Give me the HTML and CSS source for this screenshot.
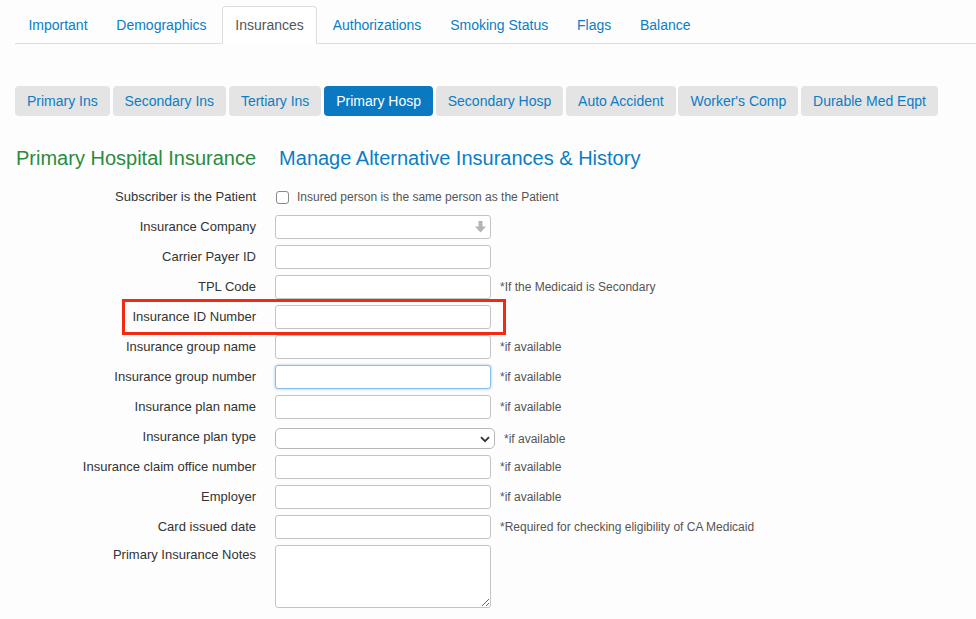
FILE: index.html
```html
<!DOCTYPE html>
<html>
<head>
    <title>Patient - Insurances</title>
    <meta name="viewport" content="width=device-width, initial-scale=1.0">
    <link rel="stylesheet" href="styles.css">
</head>
<body>
    <div class="page">
        <ul class="nav-tabs">
            <li><a href="#">Important</a></li>
            <li><a href="#">Demographics</a></li>
            <li class="active"><a href="#">Insurances</a></li>
            <li><a href="#">Authorizations</a></li>
            <li><a href="#">Smoking Status</a></li>
            <li><a href="#">Flags</a></li>
            <li><a href="#">Balance</a></li>
        </ul>

        <div class="ins-tabs">
            <a href="#" class="ins-tab">Primary Ins</a>
            <a href="#" class="ins-tab">Secondary Ins</a>
            <a href="#" class="ins-tab">Tertiary Ins</a>
            <a href="#" class="ins-tab active">Primary Hosp</a>
            <a href="#" class="ins-tab">Secondary Hosp</a>
            <a href="#" class="ins-tab">Auto Accident</a>
            <a href="#" class="ins-tab">Worker's Comp</a>
            <a href="#" class="ins-tab">Durable Med Eqpt</a>
        </div>

        <h3 class="section-title">
            <span class="title-main">Primary Hospital Insurance</span>
            <a href="#" class="title-link">Manage Alternative Insurances &amp; History</a>
        </h3>

        <form class="ins-form">
            <div class="row">
                <label class="label">Subscriber is the Patient</label>
                <div class="control">
                    <input type="checkbox" class="check">
                    <span class="check-text">Insured person is the same person as the Patient</span>
                </div>
            </div>
            <div class="row">
                <label class="label">Insurance Company</label>
                <div class="control">
                    <span class="combo">
                        <input type="text" class="field">
                        <svg class="combo-arrow" width="11" height="12" viewBox="0 0 11 12">
                            <rect x="3.5" y="0" width="4" height="6" fill="#b4b4b4"/>
                            <polygon points="0,5.5 11,5.5 5.5,11.5" fill="#b4b4b4"/>
                        </svg>
                    </span>
                </div>
            </div>
            <div class="row">
                <label class="label">Carrier Payer ID</label>
                <div class="control"><input type="text" class="field"></div>
            </div>
            <div class="row">
                <label class="label">TPL Code</label>
                <div class="control">
                    <input type="text" class="field">
                    <span class="hint">*If the Medicaid is Secondary</span>
                </div>
            </div>
            <div class="row highlighted">
                <label class="label">Insurance ID Number</label>
                <div class="control"><input type="text" class="field"></div>
                <div class="callout"></div>
            </div>
            <div class="row">
                <label class="label">Insurance group name</label>
                <div class="control">
                    <input type="text" class="field">
                    <span class="hint">*if available</span>
                </div>
            </div>
            <div class="row">
                <label class="label">Insurance group number</label>
                <div class="control">
                    <input type="text" class="field focused">
                    <span class="hint">*if available</span>
                </div>
            </div>
            <div class="row">
                <label class="label">Insurance plan name</label>
                <div class="control">
                    <input type="text" class="field">
                    <span class="hint">*if available</span>
                </div>
            </div>
            <div class="row">
                <label class="label">Insurance plan type</label>
                <div class="control">
                    <span class="select-wrap">
                        <select class="select"><option></option></select>
                        <svg class="chevron" width="10" height="7" viewBox="0 0 10 7">
                            <path d="M1 1.2 L5 5.2 L9 1.2" fill="none" stroke="#333" stroke-width="1.8"/>
                        </svg>
                    </span>
                    <span class="hint">*if available</span>
                </div>
            </div>
            <div class="row">
                <label class="label">Insurance claim office number</label>
                <div class="control">
                    <input type="text" class="field">
                    <span class="hint">*if available</span>
                </div>
            </div>
            <div class="row">
                <label class="label">Employer</label>
                <div class="control">
                    <input type="text" class="field">
                    <span class="hint">*if available</span>
                </div>
            </div>
            <div class="row">
                <label class="label">Card issued date</label>
                <div class="control">
                    <input type="text" class="field">
                    <span class="hint">*Required for checking eligibility of CA Medicaid</span>
                </div>
            </div>
            <div class="row row-top">
                <label class="label">Primary Insurance Notes</label>
                <div class="control"><textarea class="notes"></textarea></div>
            </div>
        </form>
    </div>
</body>
</html>
```

FILE: styles.css
```css
body {
    margin: 0;
    background: #fdfdfd;
    font-family: 'Liberation Sans', Arial, Helvetica, sans-serif;
    font-size: 13px;
    color: #333;
}
.page {
    padding: 0 0 0 15px;
}
a {
    text-decoration: none;
}

/* top tabs */
.nav-tabs {
    display: flex;
    list-style: none;
    margin: 6px 0 0 0;
    padding: 0;
    border-bottom: 1px solid #ddd;
}
.nav-tabs li {
    margin: 0 2px -1px 0;
}
.nav-tabs a {
    display: block;
    padding: 8px 12.4px;
    line-height: 20px;
    font-size: 14px;
    color: #0b7dc5;
    border: 1px solid transparent;
    border-radius: 4px 4px 0 0;
}
.nav-tabs li.active a {
    color: #555;
    background: #fff;
    border-color: #ddd;
    border-bottom-color: #fff;
}

/* insurance type buttons */
.ins-tabs {
    display: flex;
    gap: 2.8px;
    margin-top: 42px;
}
.ins-tab {
    display: block;
    padding: 5px 12px;
    line-height: 20px;
    font-size: 14px;
    color: #0b7dc5;
    background: #e4e4e4;
    border-radius: 4px;
}
.ins-tab.active {
    background: #0a79c2;
    color: #fff;
}

/* heading */
.section-title {
    display: flex;
    gap: 23px;
    margin: 30px 0 15px 1px;
    font-size: 20px;
    font-weight: normal;
    line-height: 24px;
}
.title-main {
    color: #2a8b3d;
}
.title-link {
    color: #0b7dc5;
}

/* form */
.ins-form {
    display: flex;
    flex-direction: column;
    gap: 6px;
}
.row {
    display: flex;
    align-items: center;
    height: 24px;
    position: relative;
}
.row-top {
    align-items: flex-start;
    height: auto;
}
.label {
    width: 241px;
    margin-right: 19px;
    text-align: right;
    line-height: 18px;
    margin-top: -1px;
}
.row-top .label {
    margin-top: 1px;
}
.control {
    display: flex;
    align-items: center;
}
.field {
    box-sizing: border-box;
    width: 216px;
    height: 24px;
    margin: 0;
    padding: 2px 6px;
    border: 1px solid #c4c4c4;
    border-radius: 3px;
    background: #fff;
    font: inherit;
}
.field.focused {
    border-color: #86bdea;
    box-shadow: 0 0 3px rgba(90, 160, 225, 0.6);
    outline: none;
}
.hint {
    margin-left: 9px;
    font-size: 12px;
    color: #555;
}
.check {
    width: 13px;
    height: 13px;
    margin: 1px 0 0 1px;
    appearance: none;
    border: 1px solid #8a8a8a;
    border-radius: 3px;
    background: #fff;
}
.check-text {
    margin-left: 8px;
    font-size: 12px;
    color: #555;
}

.combo {
    position: relative;
    display: block;
}
.combo-arrow {
    position: absolute;
    right: 5px;
    top: 6px;
}

.select-wrap {
    position: relative;
    display: block;
    margin-top: 3px;
}
.select {
    box-sizing: border-box;
    display: block;
    width: 220px;
    height: 21px;
    margin: 0;
    appearance: none;
    border: 1px solid #b8b8b8;
    border-radius: 5px;
    background: #fff;
    font: inherit;
}
.select-wrap + .hint {
    margin-top: 3px;
}
.chevron {
    position: absolute;
    right: 5px;
    top: 8px;
}

.notes {
    box-sizing: border-box;
    display: block;
    width: 216px;
    height: 63px;
    margin: 0;
    border: 1px solid #c4c4c4;
    border-radius: 3px;
    background: #fff;
    font: inherit;
}

/* annotation box round the ID number row */
.callout {
    position: absolute;
    left: 107px;
    top: -6px;
    width: 378px;
    height: 30px;
    border: 3px solid #f32a12;
    pointer-events: none;
}
```
